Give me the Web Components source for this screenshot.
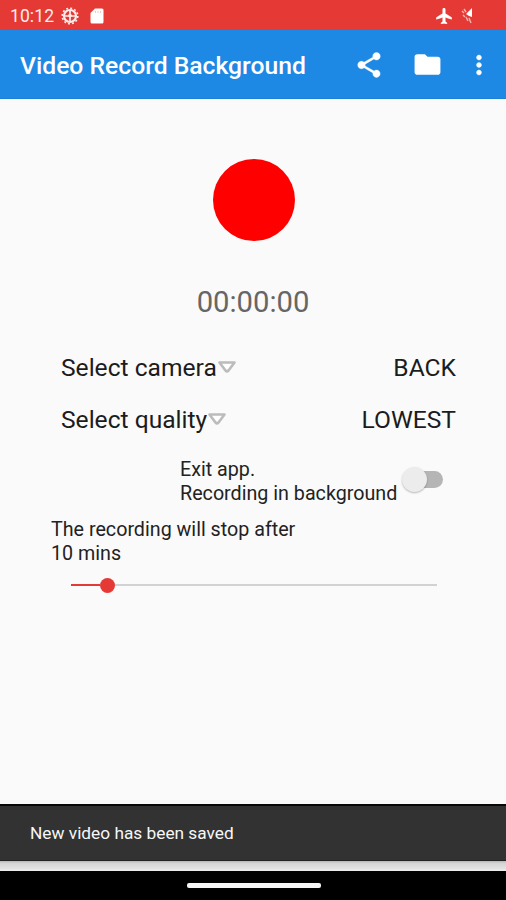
<!DOCTYPE html>
<html lang="en">
<head>
<meta charset="utf-8">
<title>Video Record Background</title>
<style>
body{margin:0;background:#fafafa;font-family:Roboto,"Liberation Sans",sans-serif}
</style>
</head>
<body>
<recorder-app></recorder-app>
<script>
const define = (name, html) => customElements.define(name, class extends HTMLElement {
  constructor() {
    super();
    const t = document.createElement('template');
    t.innerHTML = html;
    this.attachShadow({mode: 'open'}).append(t.content.cloneNode(true));
  }
});

define('status-bar', `<style>
:host{display:flex;height:30px;background:#e53935;color:#fdeceb;align-items:center;padding:2px 31px 0 10px;box-sizing:border-box;font-size:17.5px}
span{letter-spacing:.1px;width:51px}svg{display:block}.gap{flex:1}
</style>
<span>10:12</span>
<svg width="18" height="18" viewBox="0 0 18 18" fill="none" stroke="#fdeceb"><circle cx="9" cy="9" r="6" stroke-width="2.200"/><circle cx="9" cy="9" r="7.800" stroke-width="1.600" stroke-dasharray="2 2.080"/><path d="M3 9H15M9 9V15M9 3V7" stroke-width="1.700"/><circle cx="9" cy="8.500" r="1.800" fill="#fdeceb" stroke="none"/></svg>
<svg width="14" height="16" viewBox="0 0 14 16" style="margin-left:11px"><path fill="#fff" d="M5 .5H12Q13.500.5 13.500 2V14Q13.500 15.500 12 15.500H2Q.5 15.500.5 14V5Z"/><path d="M5.500 3V5M8 3V5M10.500 3V5" stroke="#f8c4c2" stroke-width="1"/></svg>
<div class="gap"></div>
<svg width="16" height="16" viewBox="2 2 19 20"><path fill="#fff" stroke="#fff" stroke-width=".7" d="M21 16v-2l-8-5V3.500c0-.83-.67-1.500-1.500-1.500S10 2.670 10 3.500V9l-8 5v2l8-2.500V19l-2 1.500V22l3.500-1 3.500 1v-1.500L13 19v-5.500z"/></svg>
<svg width="14" height="18" viewBox="0 0 14 18" style="margin-left:9px"><path fill="#fff" d="M11 1V10L8 9L5 7Z"/><path d="M1 4L3 6M3 2L5 5M2 8L4 10M5 10L7 14M8 11L10 16" stroke="#f7b5b2" stroke-width="1.400"/></svg>`);

define('app-bar', `<style>
:host{display:flex;height:69px;background:#1e88e5;color:#fff;align-items:center;padding:0 12px 0 20px;box-sizing:border-box;box-shadow:inset 0 -1px #1b7fd6}
h1{margin:0;flex:1;font-size:24.7px;font-weight:500;line-height:30px;padding-top:3px;white-space:nowrap}
svg{display:block;fill:#fff}
</style><h1><slot></slot></h1>
<svg width="30" height="30" viewBox="0 0 24 24"><path d="M18 16.080c-.76 0-1.440.3-1.960.77L8.910 12.700c.05-.23.090-.46.090-.7s-.040-.47-.090-.7l7.050-4.110c.54.5 1.250.81 2.040.81 1.660 0 3-1.340 3-3s-1.340-3-3-3-3 1.340-3 3c0 .24.040.47.090.7L8.040 9.810C7.500 9.310 6.790 9 6 9c-1.660 0-3 1.340-3 3s1.340 3 3 3c.79 0 1.500-.31 2.040-.81l7.120 4.160c-.05.21-.08.43-.08.65 0 1.610 1.310 2.920 2.920 2.920s2.920-1.310 2.920-2.920-1.310-2.920-2.920-2.920z" stroke="#fff" stroke-width=".3"/></svg>
<svg width="31" height="31" viewBox="0 0 24 24" style="margin-left:28px"><path d="M10 4H4c-1.100 0-1.990.9-1.990 2L2 18c0 1.100.9 2 2 2h16c1.100 0 2-.9 2-2V8c0-1.100-.9-2-2-2h-8l-2-2z"/></svg>
<svg width="30" height="30" viewBox="0 0 24 24" style="margin-left:21px"><path d="M12 8c1.100 0 2-.9 2-2s-.9-2-2-2-2 .9-2 2 .9 2 2 2zm0 2c-1.100 0-2 .9-2 2s.9 2 2 2 2-.9 2-2-.9-2-2-2zm0 6c-1.100 0-2 .9-2 2s.9 2 2 2 2-.9 2-2-.9-2-2-2z" stroke="#fff" stroke-width=".3"/></svg>`);

define('record-button', `<style>
:host{display:block;width:82px;height:82px;border-radius:50%;background:#f00}
</style>`);

define('option-row', `<style>
:host{display:flex;height:52px;align-items:center;padding:0 50px 0 61px;font-size:24.6px;color:#1c1c1c;line-height:30px;white-space:nowrap}
svg{display:block;margin-top:-3px}.value{margin-left:auto}
</style><slot></slot>
<svg width="20" height="16" viewBox="0 0 20 16"><path d="M2.500 3.500H17.500L11.500 11.500Q10 13 8.500 11.500Z" fill="#fff" stroke="#bcbcbc" stroke-width="2.600" stroke-linejoin="round"/></svg>
<span class="value"><slot name="value"></slot></span>`);

define('toggle-row', `<style>
:host{display:flex;padding:0 63px 0 180px;font-size:19.7px;line-height:23.5px;color:#222;white-space:nowrap;justify-content:space-between}
.switch{width:41px;height:26px;margin-top:8px;display:grid;align-items:center}
.switch>*{grid-area:1/1}
.track{height:17px;margin-left:7px;border-radius:9px;background:#b5b5b5}
.thumb{width:25px;height:25px;border-radius:50%;background:#ececec;box-shadow:0 1px 2px #0004}
</style><div><slot></slot></div><div class="switch"><div class="track"></div><div class="thumb"></div></div>`);

define('time-slider', `<style>
:host{display:flex;align-items:center;height:16px;margin:0 69px 0 71px}
.on{width:29px;height:2px;background:#e53935}.dot{width:15px;height:15px;border-radius:50%;background:#e53935}.off{flex:1;height:2px;background:#d2d2d2}
</style><div class="on"></div><div class="dot"></div><div class="off"></div>`);

define('snack-bar', `<style>
:host{display:flex;align-items:center;height:57px;background:#323232;color:#f7f7f7;border-top:2px solid #080808;border-bottom:1px solid #222;box-sizing:border-box;padding:0 30px;font-size:17.3px;white-space:nowrap}
</style><slot></slot>`);

define('nav-bar', `<style>
:host{display:flex;height:29px;background:#000;justify-content:center;align-items:center}
i{display:block;width:134px;height:5px;border-radius:2px;background:#f5f5f5;margin-left:1px}
</style><i></i>`);

define('recorder-app', `<style>
:host{display:flex;flex-direction:column;height:900px;background:#fafafa;overflow:hidden}
record-button{margin:59.500px 0 0 212.500px}
.timer{margin:44.500px 0 0;height:34px;line-height:34px;text-align:center;font-size:29.2px;font-weight:400;color:#666}
option-row:first-of-type{margin-top:23px}
toggle-row{margin-top:12px}
.limit{margin:13px 0 0 51px;font-size:19.7px;line-height:23.5px;color:#222}
time-slider{margin-top:12px}
.space{flex:1}
.shade{height:10px;background:linear-gradient(#b8b8b8,#d5d5d5 25%,#e2e2e2 75%,#eee)}
</style>
<status-bar></status-bar>
<app-bar>Video Record Background</app-bar>
<record-button></record-button>
<div class="timer">00:00:00</div>
<option-row>Select camera<span slot="value">BACK</span></option-row>
<option-row>Select quality<span slot="value">LOWEST</span></option-row>
<toggle-row>Exit app.<br>Recording in background</toggle-row>
<div class="limit">The recording will stop after<br>10 mins</div>
<time-slider></time-slider>
<div class="space"></div>
<snack-bar>New video has been saved</snack-bar>
<div class="shade"></div>
<nav-bar></nav-bar>`);
</script>
</body>
</html>
